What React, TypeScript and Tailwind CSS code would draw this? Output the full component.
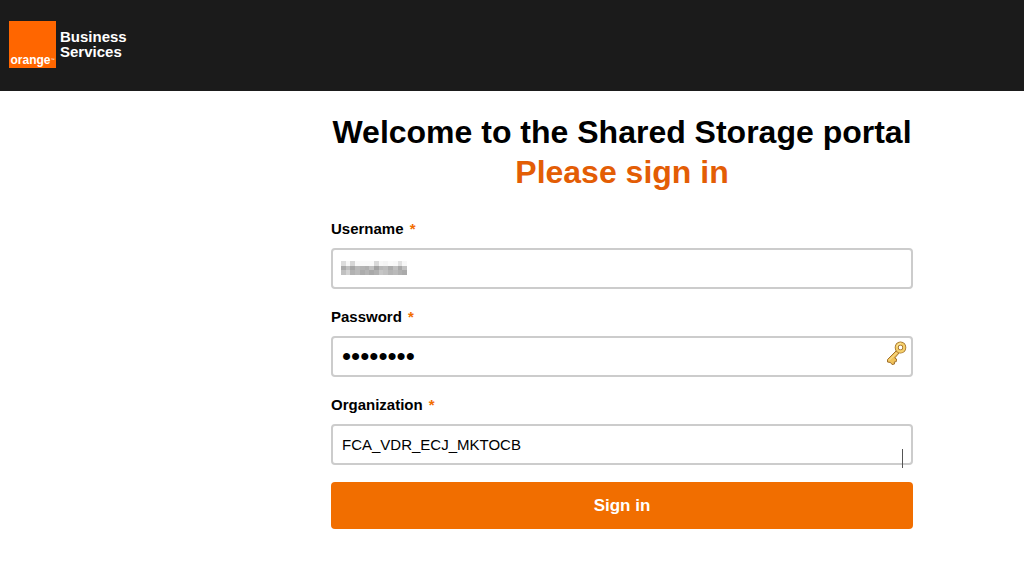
import React, { useState } from "react";

interface FieldProps {
  id: string;
  label: string;
  type?: string;
  value: string;
  onChange: (value: string) => void;
  children?: React.ReactNode;
}

// shades of the masked user name, one row per line of tiles
const maskRows = [
  ["#dcdcdc", "#f7f7f7", "#d6d6d6", "#f8f8f8", "#fafafa", "#fafafa", "#fafafa", "#d9d9d9", "#f7f7f7", "#f4f4f4", "#fafafa", "#f8f8f8", "#e0e0e0", "#f7f7f7"],
  ["#aaaaaa", "#c0c0c0", "#a6a6a6", "#b8b8b8", "#b4b4b4", "#b0b0b0", "#c0c0c0", "#a2a2a2", "#b8b8b8", "#bcbcbc", "#acacac", "#bebebe", "#a8a8a8", "#c0c0c0"],
  ["#c0c0c0", "#d2d2d2", "#b2b2b2", "#bababa", "#acacac", "#b4b4b4", "#a9a9a9", "#b0b0b0", "#c6c6c6", "#c0c0c0", "#b4b4b4", "#bababa", "#b0b0b0", "#aaaaaa"],
];

const MaskedName: React.FC = () => (
  <svg
    className="absolute left-[10px] top-[13px] pointer-events-none"
    width="66"
    height="14"
    viewBox="0 0 70 15"
    preserveAspectRatio="none"
    shapeRendering="crispEdges"
    aria-hidden="true"
  >
    {maskRows.map((row, y) =>
      row.map((fill, x) => (
        <rect key={`${x}-${y}`} x={x * 5} y={y * 5} width="5" height="5" fill={fill} />
      ))
    )}
  </svg>
);

const KeyIcon: React.FC = () => (
  <svg width="24" height="26" viewBox="0 0 24 26" aria-hidden="true">
    <path
      d="M11.500 10.500 2.500 19.500v2.500l3 .5 1.500 2 2.500-.5-.2-2 2-.4.200-2.600-1.800-1 4.800-5.500"
      fill="#f0c25a"
      stroke="#a0702c"
      strokeWidth="1"
      strokeLinejoin="round"
    />
    <path d="m12 12.500-8 8" stroke="#fbe7a0" strokeWidth="1" />
    <ellipse cx="15.500" cy="7.500" rx="3.800" ry="4" fill="none" stroke="#a0702c" strokeWidth="4" />
    <ellipse cx="15.500" cy="7.500" rx="3.800" ry="4" fill="none" stroke="#f5cf6a" strokeWidth="2.400" />
    <path d="M12 6.500c.6-1.800 1.900-2.900 3.700-3" fill="none" stroke="#fdf0b8" strokeWidth="1" />
  </svg>
);

const Field: React.FC<FieldProps> = ({ id, label, type = "text", value, onChange, children }) => (
  <div className="mb-[17px]">
    <label htmlFor={id} className="block mb-2 text-[15px] leading-[22px] font-bold text-black">
      {label} <span className="ml-0.5 text-[#f16e00]">*</span>
    </label>
    <div className="relative">
      <input
        id={id}
        type={type}
        value={value}
        onChange={(e) => onChange(e.target.value)}
        className={`block w-full h-[41px] px-[9px] border-2 border-[#cccccc] rounded text-black bg-white outline-none ${
          type === "password" ? "text-[26px]" : "text-[15px]"
        }`}
      />
      {children}
    </div>
  </div>
);

const App: React.FC = () => {
  const [username, setUsername] = useState("");
  const [password, setPassword] = useState("password");
  const [organization, setOrganization] = useState("FCA_VDR_ECJ_MKTOCB");

  return (
    <div className="min-h-screen bg-white font-['Liberation_Sans',Arial,sans-serif]">
      <header className="flex items-center h-[91px] px-[9px] pb-[3px] bg-[#1b1b1b]">
        <div className="flex items-end justify-center w-[47px] h-[47px] bg-[#ff6600] text-white text-xs leading-4 font-bold">
          orange
          <span className="self-end mb-1 text-[4px] leading-[8px] font-normal">™</span>
        </div>
        <div className="ml-1 text-[15px] leading-[15px] font-bold text-white">
          Business
          <br />
          Services
        </div>
      </header>

      <main className="pl-[220px] pt-[21px]">
        <div className="w-full max-w-[582px] mx-auto">
          <h1 className="mb-[26px] text-center text-[32px] leading-10 font-bold text-black">
            Welcome to the Shared Storage portal
            <span className="block text-[#e35d05]">Please sign in</span>
          </h1>

          <form onSubmit={(e) => e.preventDefault()}>
            <Field id="username" label="Username" value={username} onChange={setUsername}>
              {!username && <MaskedName />}
            </Field>
            <Field
              id="password"
              label="Password"
              type="password"
              value={password}
              onChange={setPassword}
            >
              <div className="absolute right-1 top-1 pointer-events-none">
                <KeyIcon />
              </div>
            </Field>
            <Field
              id="organization"
              label="Organization"
              value={organization}
              onChange={setOrganization}
            >
              <div className="absolute right-[10px] top-[25px] w-px h-[19px] bg-[#555555]" />
            </Field>
            <button
              type="submit"
              className="block w-full h-[47px] rounded bg-[#f16e00] text-white text-[17px] font-bold cursor-pointer"
            >
              Sign in
            </button>
          </form>
        </div>
      </main>
    </div>
  );
};

export default App;
